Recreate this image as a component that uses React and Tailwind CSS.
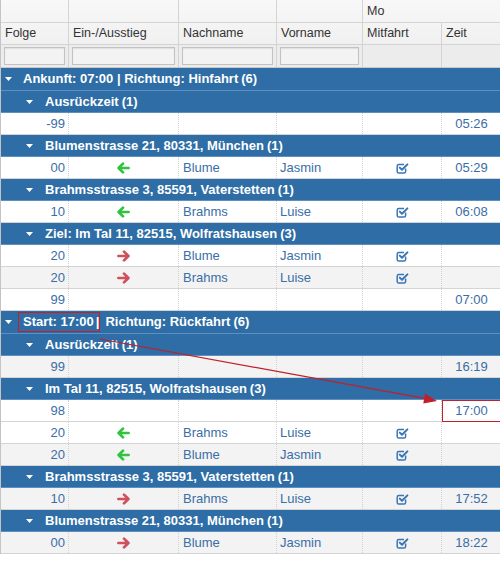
import React from "react"

const GRID = "grid grid-cols-[68px_110px_98px_86px_79px_59px]"
const FONT = { fontFamily: '"Liberation Sans", Arial, Helvetica, sans-serif' }

function Caret() {
  return (
    <svg width="7" height="4" viewBox="0 0 7 4" className="shrink-0">
      <path d="M0 0 H7 L3.5 4 Z" fill="#ffffff" />
    </svg>
  )
}

function ArrowIcon({ dir }) {
  const color = dir === "in" ? "#2fc43e" : "#d0505c"
  return (
    <svg width="13" height="12" viewBox="0 0 13 12" className={dir === "in" ? "" : "rotate-180"}>
      <path
        d="M1.6 6 L6 1.6 M1.6 6 L6 10.4 M2 6 H11.6"
        stroke={color}
        strokeWidth="2.7"
        strokeLinecap="round"
        strokeLinejoin="round"
        fill="none"
      />
    </svg>
  )
}

function CheckIcon() {
  return (
    <svg width="13" height="12" viewBox="0 0 13 12">
      <path
        d="M9.6 6.4 V9.4 a1.6 1.6 0 0 1 -1.6 1.6 H2.8 a1.6 1.6 0 0 1 -1.6 -1.6 V4.2 a1.6 1.6 0 0 1 1.6 -1.6 H8"
        stroke="#3b76b4"
        strokeWidth="1.5"
        fill="none"
      />
      <path
        d="M3.8 5.6 L6 7.8 L11.4 2.4"
        stroke="#3b76b4"
        strokeWidth="2"
        strokeLinecap="round"
        strokeLinejoin="round"
        fill="none"
      />
    </svg>
  )
}

function GroupRow({ level, label, count, children }) {
  return (
    <div
      className={`flex items-center bg-[#2e6da5] text-white font-bold text-[13px] border-b border-[#5f8fc0] ${
        level === 0 ? "h-[23px] pl-[4px]" : "h-[22px] pl-[25px]"
      }`}
    >
      <Caret />
      <span className={level === 0 ? "ml-[11px]" : "ml-[12px]"}>
        {children || label}
      </span>
      <span className="ml-[3px]">({count})</span>
    </div>
  )
}

function DataRow({ folge, dir, nach, vor, mit, zeit, gray, mark }) {
  const cell = "flex items-center h-full border-r border-dotted border-[#d2d2d2]"
  return (
    <div
      className={`${GRID} h-[22px] text-[13px] text-[#3a6ea6] border-b border-[#d4d4d4] ${
        gray ? "bg-[#f3f3f3]" : "bg-white"
      }`}
    >
      <div className={`${cell} justify-end pr-[3px]`}>{folge}</div>
      <div className={`${cell} justify-center`}>{dir && <ArrowIcon dir={dir} />}</div>
      <div className={`${cell} pl-[4px]`}>{nach}</div>
      <div className={`${cell} pl-[3px]`}>{vor}</div>
      <div className={`${cell} justify-center`}>{mit && <CheckIcon />}</div>
      <div
        className={`flex items-center justify-center h-full ${
          mark ? "border border-[#c0202c]" : ""
        }`}
      >
        {zeit}
      </div>
    </div>
  )
}

export default function App() {
  const hcell = "flex items-center h-full border-r border-[#d4d4d4] pl-[4px]"
  return (
    <div className="relative w-[500px] bg-white border-l border-[#c4c4c4] text-[#333]" style={FONT}>
      {/* column header */}
      <div className="bg-gradient-to-b from-[#f8f8f8] to-[#ececec] text-[12.5px] text-[#333]">
        <div className={`${GRID} h-[23px] border-b border-[#d4d4d4]`}>
          <div className={hcell}></div>
          <div className={hcell}></div>
          <div className={hcell}></div>
          <div className={hcell}></div>
          <div className="col-span-2 flex items-center h-full pl-[4px]">Mo</div>
        </div>
        <div className={`${GRID} h-[22px] border-b border-[#d4d4d4]`}>
          <div className={`${hcell} pl-[3px]`}>Folge</div>
          <div className={hcell}>Ein-/Ausstieg</div>
          <div className={hcell}>Nachname</div>
          <div className={`${hcell} pl-[3px]`}>Vorname</div>
          <div className={hcell}>Mitfahrt</div>
          <div className="flex items-center h-full pl-[4px]">Zeit</div>
        </div>
        <div className={`${GRID} h-[23px] bg-[#ececec] border-b border-[#c8c8c8]`}>
          {[0, 1, 2, 3].map((i) => (
            <div key={i} className="flex items-center h-full border-r border-[#d4d4d4] px-[3px]">
              <input
                readOnly
                className="w-full h-[18px] bg-[#f3f3f3] border border-[#c2c2c2] shadow-[inset_0_1px_1px_rgba(0,0,0,0.08)] outline-none"
              />
            </div>
          ))}
          <div className="h-full border-r border-[#d4d4d4]"></div>
          <div className="h-full"></div>
        </div>
      </div>

      {/* Hinfahrt */}
      <GroupRow level={0} label="Ankunft: 07:00 | Richtung: Hinfahrt" count={6} />
      <GroupRow level={1} label="Ausrückzeit" count={1} />
      <DataRow folge="-99" zeit="05:26" />
      <GroupRow level={1} label="Blumenstrasse 21, 80331, München" count={1} />
      <DataRow folge="00" dir="in" nach="Blume" vor="Jasmin" mit zeit="05:29" />
      <GroupRow level={1} label="Brahmsstrasse 3, 85591, Vaterstetten" count={1} />
      <DataRow folge="10" dir="in" nach="Brahms" vor="Luise" mit zeit="06:08" />
      <GroupRow level={1} label="Ziel: Im Tal 11, 82515, Wolfratshausen" count={3} />
      <DataRow folge="20" dir="out" nach="Blume" vor="Jasmin" mit />
      <DataRow folge="20" dir="out" nach="Brahms" vor="Luise" mit gray />
      <DataRow folge="99" zeit="07:00" />

      {/* Rückfahrt */}
      <GroupRow level={0} count={6}>
        <span className="inline-block border border-[#c0202c] pl-[4px] pr-[5px] -ml-[5px] leading-[18px]">
          Start: 17:00
        </span>
        <span className="-ml-[4px]">|</span>
        <span className="ml-[6px]">Richtung: Rückfahrt</span>
      </GroupRow>
      <GroupRow level={1} label="Ausrückzeit" count={1} />
      <DataRow folge="99" zeit="16:19" gray />
      <GroupRow level={1} label="Im Tal 11, 82515, Wolfratshausen" count={3} />
      <DataRow folge="98" zeit="17:00" mark />
      <DataRow folge="20" dir="in" nach="Brahms" vor="Luise" mit />
      <DataRow folge="20" dir="in" nach="Blume" vor="Jasmin" mit gray />
      <GroupRow level={1} label="Brahmsstrasse 3, 85591, Vaterstetten" count={1} />
      <DataRow folge="10" dir="out" nach="Brahms" vor="Luise" mit zeit="17:52" gray />
      <GroupRow level={1} label="Blumenstrasse 21, 80331, München" count={1} />
      <DataRow folge="00" dir="out" nach="Blume" vor="Jasmin" mit zeit="18:22" gray />

      {/* annotation arrow */}
      <svg className="absolute left-0 top-0 pointer-events-none" width="500" height="561">
        <line x1="99" y1="339" x2="425" y2="398.6" stroke="#c0202c" strokeWidth="1.2" />
        <polygon points="436,401 424,393.6 422.3,403.6" fill="#c0202c" />
      </svg>
    </div>
  )
}
